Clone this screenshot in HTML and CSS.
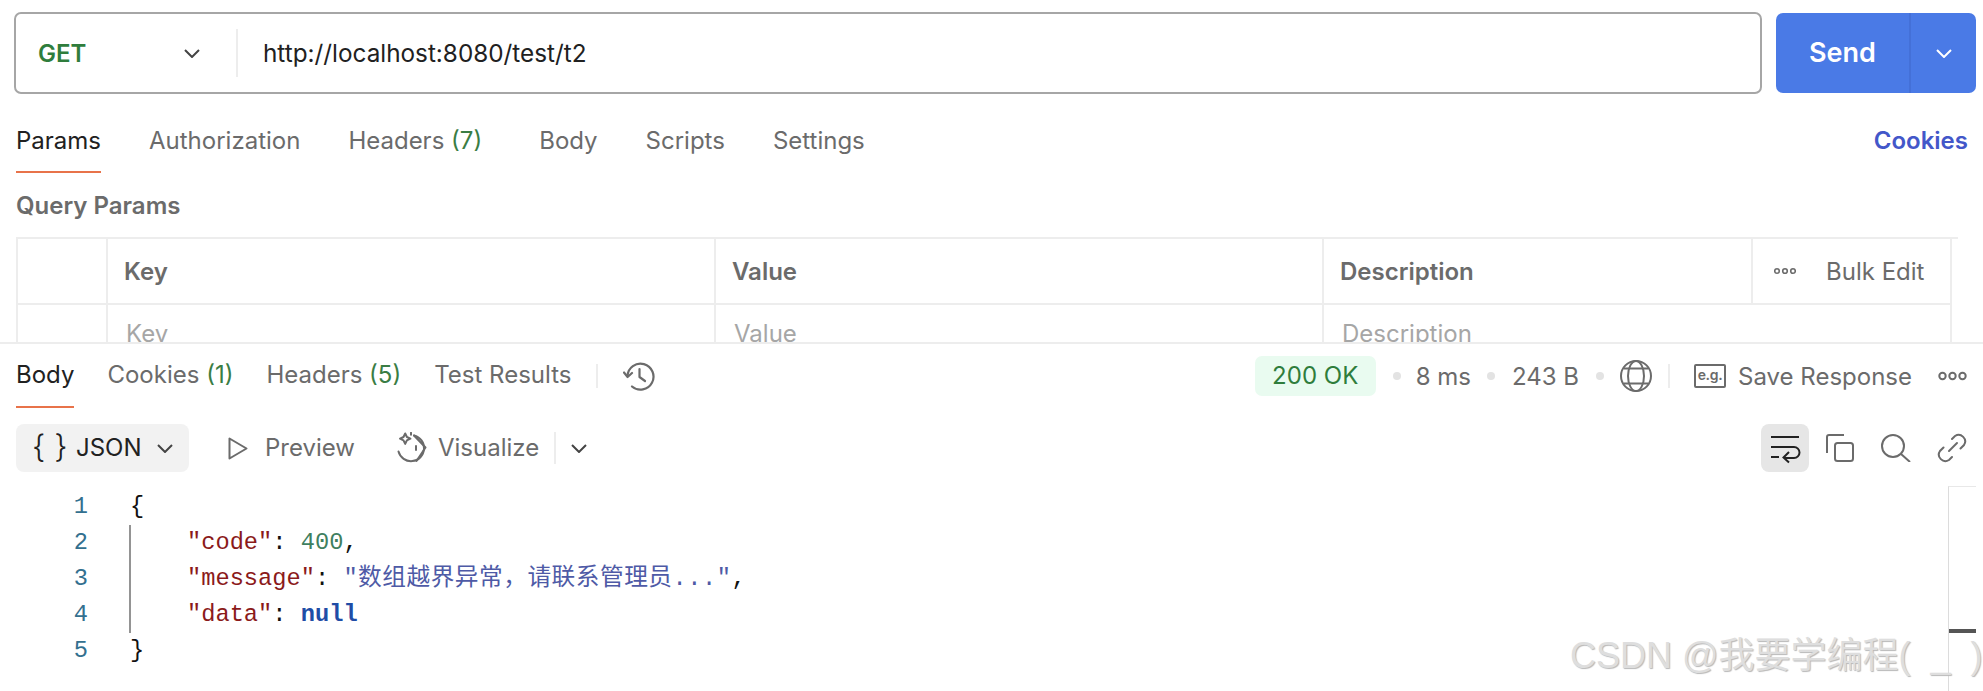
FILE: index.html
```html
<!DOCTYPE html>
<html lang="en">
<head>
<meta charset="utf-8">
<title>Postman request</title>
<link rel="stylesheet" href="styles.css">
</head>
<body>
<div class="app">
  <section class="request">
    <div class="url-row">
      <div class="url-bar">
        <div class="method">
          <span class="method-name">GET</span>
          <svg class="chev" viewBox="0 0 16 9"><path d="M1 1l7 7 7-7"/></svg>
        </div>
        <div class="url-text">http://localhost:8080/test/t2</div>
      </div>
      <div class="send">
        <span class="send-label">Send</span>
        <span class="send-more"><svg class="chev chev-white" viewBox="0 0 16 9"><path d="M1 1l7 7 7-7"/></svg></span>
      </div>
    </div>
    <div class="req-tabs">
      <span class="tab active">Params</span>
      <span class="tab">Authorization</span>
      <span class="tab tab-wide">Headers <i class="count">(7)</i></span>
      <span class="tab">Body</span>
      <span class="tab">Scripts</span>
      <span class="tab">Settings</span>
      <span class="cookies">Cookies</span>
    </div>
    <h2 class="query-title">Query Params</h2>
    <div class="params">
      <div class="cell"></div>
      <div class="cell head">Key</div>
      <div class="cell head">Value</div>
      <div class="cell head">Description</div>
      <div class="cell bulk">
        <svg class="ooo-small" viewBox="0 0 22 8"><circle cx="3" cy="4" r="2.3"/><circle cx="11" cy="4" r="2.3"/><circle cx="19" cy="4" r="2.3"/></svg>
        <span>Bulk Edit</span>
      </div>
      <div class="cell"></div>
      <div class="cell ph">Key</div>
      <div class="cell ph">Value</div>
      <div class="cell ph span2">Description</div>
    </div>
  </section>

  <section class="response">
    <div class="res-tabs">
      <span class="tab active">Body</span>
      <span class="tab">Cookies <i class="count">(1)</i></span>
      <span class="tab">Headers <i class="count">(5)</i></span>
      <span class="tab">Test Results</span>
      <span class="vsep"></span>
      <svg class="ic-history" viewBox="0 0 32 30"><path d="M4.500 15A13 13 0 1 1 9 25.500"/><path d="M1 11.500l3.600 4.500 4.400-4"/><path d="M16.500 8v8l5.500 4"/></svg>
      <div class="res-meta">
        <span class="status">200 OK</span>
        <span class="dot dot-first"></span>
        <span class="meta">8 ms</span>
        <span class="dot dot-second"></span>
        <span class="meta">243 B</span>
        <span class="dot"></span>
        <svg class="ic-globe" viewBox="0 0 32 32"><circle cx="16" cy="16" r="15"/><ellipse cx="16" cy="16" rx="8" ry="15"/><path d="M4 8.500h24M4 23.500h24"/></svg>
        <span class="vsep vsep-meta"></span>
        <span class="eg">e.g.</span>
        <span class="meta save">Save Response</span>
        <svg class="ooo" viewBox="0 0 29 12"><circle cx="4.500" cy="6" r="3.200"/><circle cx="14.500" cy="6" r="3.200"/><circle cx="24.500" cy="6" r="3.200"/></svg>
      </div>
    </div>

    <div class="res-tools">
      <div class="json-btn">
        <span class="braces">{ }</span>
        <span class="json-label">JSON</span>
        <svg class="chev" viewBox="0 0 16 9"><path d="M1 1l7 7 7-7"/></svg>
      </div>
      <div class="tool tool-preview">
        <svg class="ic-play" viewBox="0 0 20 23"><path d="M1.500 1.500v20l17-10z"/></svg>
        <span>Preview</span>
      </div>
      <div class="tool tool-vis">
        <svg class="ic-vis" viewBox="0 0 32 32"><path d="M18 3.500a13 13 0 1 1-15.500 16"/><path d="M7.500 5l1.700-3.500 1.700 3.500 3.500 1.700-3.500 1.700-1.700 3.500-1.700-3.500-3.500-1.700z"/><path d="M18 3.500l11.500 12-9 13.500"/><path d="M20 14v4"/><path d="M15 .8v2"/></svg>
        <span>Visualize</span>
      </div>
      <span class="vsep vsep-tool"></span>
      <svg class="chev" viewBox="0 0 16 9"><path d="M1 1l7 7 7-7"/></svg>
      <div class="tool-right">
        <div class="wrap-btn">
          <svg class="ic-wrap" viewBox="0 0 28 24"><path d="M0 1h28M0 11h23a5.500 5.500 0 0 1 0 11H14M0 21h8M18 16l-5.500 5.500 5.500 5"/></svg>
        </div>
        <svg class="ic-copy" viewBox="0 0 28 28"><rect x="9" y="9" width="18" height="18" rx="2.500"/><path d="M1 19V3a2 2 0 0 1 2-2h15"/></svg>
        <svg class="ic-search" viewBox="0 0 30 28"><circle cx="12" cy="12" r="11"/><path d="M20 20l9 8"/></svg>
        <svg class="ic-link" viewBox="0 0 30 30"><path d="M12 18l8-8"/><path d="M15 6l3-3a6.500 6.500 0 0 1 9 9l-3.500 3.500M15 24l-3 3a6.500 6.500 0 0 1-9-9l3.500-3.500"/></svg>
      </div>
    </div>

    <div class="code">
      <div class="gutter">
        <span>1</span><span>2</span><span>3</span><span>4</span><span>5</span>
      </div>
      <div class="lines">
        <span class="guide"></span>
        <div class="line">{</div>
        <div class="line in"><span class="k">"code"</span>: <span class="n">400</span>,</div>
        <div class="line in"><span class="k">"message"</span>: <span class="s">"数组越界异常，请联系管理员..."</span>,</div>
        <div class="line in"><span class="k">"data"</span>: <span class="b">null</span></div>
        <div class="line">}</div>
      </div>
    </div>
    <div class="scrollbar"><span class="thumb"></span></div>
  </section>
  <div class="watermark">CSDN @我要学编程(  _  )</div>
</div>
</body>
</html>
```
FILE: styles.css
```css
* { box-sizing: border-box; }
html, body { margin: 0; padding: 0; background: #fff; }
body { font-family: Inter, "Noto Sans CJK SC", sans-serif; font-size: 24px; color: #6b6b6b; }
.app { position: relative; width: 1983px; height: 691px; overflow: hidden; }
i { font-style: normal; }

svg { fill: none; stroke: #6b6b6b; stroke-width: 2; flex: none; display: block; }
.chev { width: 16px; height: 9px; stroke: #444; }
.chev-white { stroke: #fff; }

/* request pane */
.request { height: 344px; border-bottom: 2px solid #ededed; padding: 12px 7px 0 14px; overflow: hidden; }
.url-row { display: flex; align-items: center; gap: 14px; }
.url-bar { flex: 1; height: 82px; border: 2px solid #a6a6a6; border-radius: 7px; display: flex; align-items: center; }
.method { width: 222px; height: 48px; padding: 0 36px 0 22px; display: flex; align-items: center; justify-content: space-between; border-right: 2px solid #ededed; }
.method-name { color: #2f7d3c; font-weight: 600; }
.url-text { color: #212121; margin-left: 25px; font-size: 24.300px; }
.send { width: 200px; height: 80px; background: #4a7ae6; border-radius: 7px; display: flex; color: #fff; font-weight: 600; font-size: 27px; }
.send-label { width: 135px; padding-bottom: 2px; display: flex; align-items: center; justify-content: center; border-right: 2px solid #4470d8; }
.send-more { flex: 1; display: flex; align-items: center; justify-content: center; }

.req-tabs { display: flex; align-items: flex-start; gap: 48px; margin: 30px 8px 0 2px; height: 49px; line-height: 33px; }
.tab { display: block; height: 49px; white-space: nowrap; }
.tab.active { color: #212121; border-bottom: 2px solid #e8734a; }
.tab-wide { margin-right: 9px; }
.count { color: #3a7d44; }
.cookies { margin-left: auto; color: #4357c9; font-weight: 600; }

.query-title { margin: 17px 0 0 2px; height: 31px; font-size: 24px; line-height: 31px; font-weight: 600; color: #6b6b6b; }
.params { margin: 16px 18px 0 2px; display: grid; grid-template-columns: 90px 608px 608px 429px 199px; border-top: 2px solid #ededed; border-left: 2px solid #ededed; }
.cell { height: 66px; padding: 0 0 0 16px; display: flex; align-items: center; border-right: 2px solid #ededed; border-bottom: 2px solid #ededed; }
.head { font-weight: 600; }
.bulk { padding-left: 21px; gap: 30px; }
.ooo-small { width: 22px; height: 8px; stroke-width: 1.600; }
.ph { color: #a6a6a6; padding: 0 0 8px 18px; }
.span2 { grid-column: span 2; }

/* response pane */
.response { position: relative; height: 347px; padding: 0 16px; }
.res-tabs { display: flex; align-items: flex-start; gap: 33px; height: 64px; padding-top: 14px; line-height: 33px; }
.res-tabs .tab { height: 50px; }
.vsep { width: 2px; height: 24px; background: #ededed; margin-top: 6px; flex: none; }
.res-tabs > .vsep { margin-left: -8px; }
.ic-history { width: 32px; height: 30px; margin: 3px 0 0 -8px; stroke-width: 2.200; stroke-linejoin: round; stroke-linecap: round; }
.res-meta { margin-left: auto; display: flex; align-items: center; height: 40px; margin-top: -2px; }
.status { width: 121px; height: 40px; background: #e9fbf0; color: #2f7d3c; border-radius: 7px; text-align: center; line-height: 40px; }
.dot { width: 8px; height: 8px; background: #e3e3e3; border-radius: 50%; margin: 0 17px; flex: none; }
.dot-first { margin-right: 15px; }
.dot-second { margin-left: 16px; }
.meta { white-space: nowrap; }
.ic-globe { width: 32px; height: 32px; margin-left: -1px; }
.vsep-meta { margin: 0 24px 0 16px; }
.eg { width: 32px; height: 24px; border: 2px solid #6b6b6b; border-radius: 2px; font-size: 14px; font-weight: 600; letter-spacing: -.3px; line-height: 18px; text-align: center; flex: none; }
.save { margin-left: 12px; }
.ooo { width: 29px; height: 12px; margin: 0 0 0 26px; }

.res-tools { display: flex; align-items: center; height: 48px; margin-top: 16px; }
.json-btn { width: 173px; height: 48px; background: #f2f2f2; border-radius: 8px; display: flex; align-items: center; color: #212121; padding-left: 16px; }
.braces { font-size: 32px; width: 44px; font-weight: 300; white-space: nowrap; padding-bottom: 4px; }
.json-label { width: 81px; padding-bottom: 2px; }
.tool { display: flex; align-items: center; white-space: nowrap; }
.tool span { padding-bottom: 2px; }
.tool-preview { margin-left: 39px; gap: 17px; }
.ic-play { width: 20px; height: 23px; stroke-linejoin: round; }
.tool-vis { margin-left: 41px; gap: 10px; }
.ic-vis { width: 32px; height: 32px; stroke-linejoin: round; stroke-linecap: round; }
.vsep-tool { height: 32px; margin: 0 15px 0 15px; }
.tool-right { margin-left: auto; display: flex; align-items: center; }
.wrap-btn { width: 48px; height: 48px; background: #e6e6e6; border-radius: 8px; display: flex; align-items: center; justify-content: center; }
.ic-wrap { width: 28px; height: 24px; stroke: #212121; overflow: visible; }
.ic-copy { width: 28px; height: 28px; margin-left: 17px; }
.ic-search { width: 30px; height: 28px; margin-left: 27px; }
.ic-link { width: 30px; height: 30px; margin-left: 26px; stroke-linecap: round; }

.code { display: flex; margin-top: 17px; font-family: "Liberation Mono", "Noto Sans CJK SC", monospace; font-size: 23.700px; line-height: 36px; color: #111; }
.gutter { width: 72px; display: flex; flex-direction: column; align-items: flex-end; color: #33708f; }
.lines { position: relative; margin-left: 42px; }
.line { white-space: pre; height: 36px; }
.guide { position: absolute; left: -1px; top: 36px; bottom: 36px; width: 2px; background: #949494; }
.line.in { padding-left: 57px; }
.k { color: #8b1a1a; }
.n { color: #3f7f5f; }
.s { color: #4e5aa6; letter-spacing: .5px; }
.b { color: #1f4da6; font-weight: 700; }

.scrollbar { position: absolute; left: 1948px; top: 142px; right: 7px; bottom: 0; border-left: 1px solid #dcdcdc; border-top: 1px solid #e8e8e8; }
.thumb { position: absolute; left: 0; right: 0; top: 142px; height: 4px; background: #555; }

.watermark { position: absolute; left: 1570px; top: 626px; white-space: pre; font-family: "Liberation Sans", "Noto Sans CJK SC", sans-serif; font-size: 36px; color: #dedede; text-shadow: 1px 1px 1px #b8b8b8; }
```
